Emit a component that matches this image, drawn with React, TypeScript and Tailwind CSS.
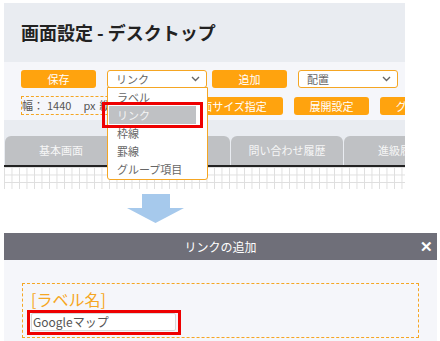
import React from "react";

const Btn = ({ w, children }: { w: string; children: React.ReactNode }) => (
  <div className={`${w} h-[18px] shrink-0 rounded-[3px] bg-[#ffa30e] text-white text-[11px] leading-[18px] text-center whitespace-nowrap overflow-hidden`}>
    {children}
  </div>
);

const Chevron = () => (
  <svg width="9" height="6" viewBox="0 0 9 6" className="shrink-0">
    <path d="M1 1 L4.5 4.5 L8 1" fill="none" stroke="#666" strokeWidth="1.4" />
  </svg>
);

const Select = ({ label }: { label: string }) => (
  <div className="w-[100px] h-[18px] shrink-0 rounded-[3px] border border-[#f5a623] bg-white flex items-center justify-between pl-[8px] pr-[6px] text-[11px] text-[#666]">
    <span>{label}</span>
    <Chevron />
  </div>
);

export default function App() {
  return (
    <div className="relative w-[440px] h-[341px] overflow-hidden bg-white font-['Noto_Sans_CJK_JP','Noto_Sans',sans-serif]">
      {/* Top panel */}
      <div className="ml-[4px] mt-[3px] w-[401px] overflow-hidden">
        <div className="h-[59px] bg-[#e9ecf1] flex items-center pl-[17px] pb-[1px]">
          <h1 className="text-[18px] font-bold text-[#222]">画面設定 - デスクトップ</h1>
        </div>
        <div className="h-[58px] bg-[#f5f6fa] pl-[17px] pt-[8px] flex flex-col gap-[8px]">
          <div className="flex items-center gap-[11px]">
            <Btn w="w-[75px]">保存</Btn>
            <div className="flex gap-[5px]">
              <Select label="リンク" />
              <Btn w="w-[75px]">追加</Btn>
            </div>
            <Select label="配置" />
          </div>
          <div className="flex items-center gap-[11px]">
            <div className="w-[142px] h-[19px] shrink-0 border border-dashed border-[#f5a623] flex items-center text-[11px] text-[#555] whitespace-nowrap overflow-hidden">
              <span>幅：</span>
              <span className="ml-[3px]">1440</span>
              <span className="ml-[12px]">px</span>
              <span className="ml-[4px]">縦：</span>
              <span className="ml-[3px]">900</span>
            </div>
            <Btn w="w-[109px]">画面サイズ指定</Btn>
            <Btn w="w-[75px]">展開設定</Btn>
            <Btn w="w-[75px]">グループ</Btn>
          </div>
        </div>
        <div className="bg-[#e9ecf1] pt-[16px] pl-[1px] flex gap-[1px]">
          {["基本画面", "詳細画面", "問い合わせ履歴", "進級履歴"].map((t) => (
            <div
              key={t}
              className="w-[112px] h-[29px] shrink-0 rounded-t-[6px] bg-[#bfc1c4] text-[11px] text-[#f6f6f6] flex items-center justify-center whitespace-nowrap"
            >
              {t}
            </div>
          ))}
        </div>
        <div className="h-[2px] bg-[#222]" />
        <div className="h-[22px] bg-white bg-[linear-gradient(to_right,#dedede_1px,transparent_1px),linear-gradient(to_bottom,#dedede_1px,transparent_1px)] bg-[size:7.5px_7.5px]" />
      </div>

      {/* Arrow */}
      <div className="ml-[127px] mt-[5px] h-[39px]">
        <svg width="57" height="29" viewBox="0 0 57 29">
          <path d="M15 0 H43 V14 H57 L28.5 29 L0 14 H15 Z" fill="#a6c9ec" />
        </svg>
      </div>

      {/* Dialog */}
      <div className="ml-[4px] w-[433px]">
        <div className="relative h-[27px] bg-[#6f6f79] flex items-center justify-center text-white text-[12px]">
          リンクの追加
          <span className="absolute right-[4px] top-[4px] text-[15px] font-bold leading-[18px]">✕</span>
        </div>
        <div className="h-[81px] bg-[#f5f6fa] pt-[23px] pl-[18px]">
          <div className="w-[397px] h-[55px] border border-dashed border-[#f5a623] pl-[8px] pt-[4px]">
            <div className="text-[16px] leading-[22px] text-[#f5a623]">[ラベル名]</div>
            <div className="mt-[3px] w-[145px] h-[18px] rounded-[2px] border border-[#d8d8d8] bg-white text-[12px] text-[#555] leading-[16px] pl-[1px]">
              Googleマップ
            </div>
          </div>
        </div>
      </div>

      {/* Dropdown overlay */}
      <div className="absolute left-[107px] top-[87px] w-[101px] h-[93px] bg-white border border-[#f5a623] rounded-b-[3px] text-[11px] text-[#666]">
        <div className="h-[18px] leading-[18px] pl-[9px]">ラベル</div>
        <div className="h-[18px] leading-[18px] pl-[8px] ml-[1px] w-[87px] bg-[#bfc1c4] text-[#f4f4f4]">リンク</div>
        <div className="h-[18px] leading-[18px] pl-[9px]">枠線</div>
        <div className="h-[18px] leading-[18px] pl-[9px]">罫線</div>
        <div className="h-[18px] leading-[18px] pl-[9px]">グループ項目</div>
      </div>

      {/* Red highlight boxes */}
      <div className="absolute left-[102px] top-[102px] w-[101px] h-[26px] border-[3px] border-[#ee0000]" />
      <div className="absolute left-[27px] top-[310px] w-[154px] h-[25px] border-[3px] border-[#ee0000]" />
    </div>
  );
}
